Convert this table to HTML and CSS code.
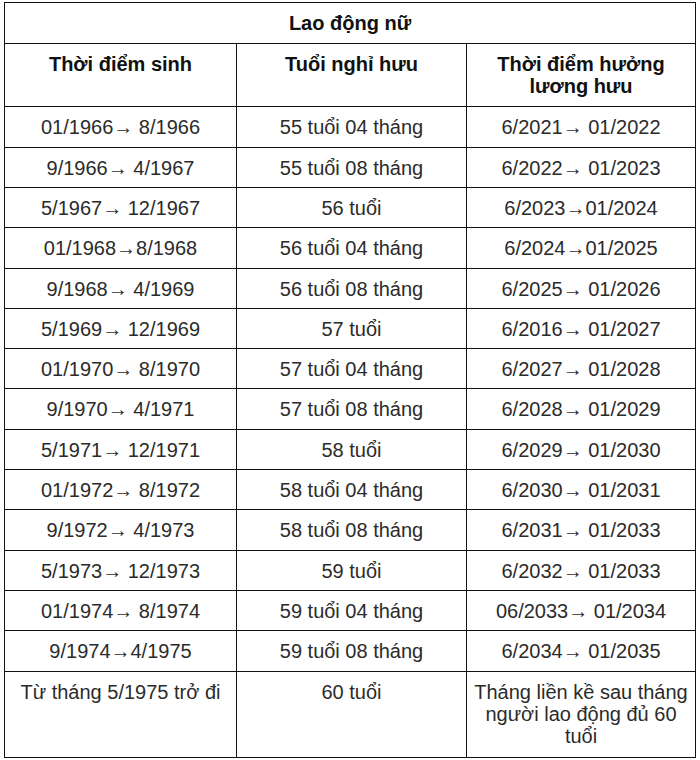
FILE: index.html
```html
<!DOCTYPE html>
<html lang="vi">
<head>
<meta charset="utf-8">
<link rel="stylesheet" href="styles.css">
</head>
<body>
<table class="retire">
  <colgroup><col class="c1"><col class="c2"><col class="c3"></colgroup>
  <thead>
    <tr><th colspan="3" class="title">Lao động nữ</th></tr>
    <tr class="head">
      <th>Thời điểm sinh</th>
      <th>Tuổi nghỉ hưu</th>
      <th>Thời điểm hưởng lương hưu</th>
    </tr>
  </thead>
  <tbody>
    <tr><td>01/1966→ 8/1966</td><td>55 tuổi 04 tháng</td><td>6/2021→ 01/2022</td></tr>
    <tr><td>9/1966→ 4/1967</td><td>55 tuổi 08 tháng</td><td>6/2022→ 01/2023</td></tr>
    <tr><td>5/1967→ 12/1967</td><td>56 tuổi</td><td>6/2023→01/2024</td></tr>
    <tr><td>01/1968→8/1968</td><td>56 tuổi 04 tháng</td><td>6/2024→01/2025</td></tr>
    <tr><td>9/1968→ 4/1969</td><td>56 tuổi 08 tháng</td><td>6/2025→ 01/2026</td></tr>
    <tr><td>5/1969→ 12/1969</td><td>57 tuổi</td><td>6/2016→ 01/2027</td></tr>
    <tr><td>01/1970→ 8/1970</td><td>57 tuổi 04 tháng</td><td>6/2027→ 01/2028</td></tr>
    <tr><td>9/1970→ 4/1971</td><td>57 tuổi 08 tháng</td><td>6/2028→ 01/2029</td></tr>
    <tr><td>5/1971→ 12/1971</td><td>58 tuổi</td><td>6/2029→ 01/2030</td></tr>
    <tr><td>01/1972→ 8/1972</td><td>58 tuổi 04 tháng</td><td>6/2030→ 01/2031</td></tr>
    <tr><td>9/1972→ 4/1973</td><td>58 tuổi 08 tháng</td><td>6/2031→ 01/2033</td></tr>
    <tr><td>5/1973→ 12/1973</td><td>59 tuổi</td><td>6/2032→ 01/2033</td></tr>
    <tr><td>01/1974→ 8/1974</td><td>59 tuổi 04 tháng</td><td>06/2033→ 01/2034</td></tr>
    <tr><td>9/1974→4/1975</td><td>59 tuổi 08 tháng</td><td>6/2034→ 01/2035</td></tr>
    <tr class="last"><td>Từ tháng 5/1975 trở đi</td><td>60 tuổi</td><td>Tháng liền kề sau tháng người lao động đủ 60 tuổi</td></tr>
  </tbody>
</table>
</body>
</html>
```

FILE: styles.css
```css
html, body {
  margin: 0;
  padding: 0;
  background: #ffffff;
}
body {
  padding: 2px 0 0 4px;
  font-family: "Liberation Sans", Arial, sans-serif;
  color: #2b2b2b;
}
.retire {
  border-collapse: collapse;
  width: 691px;
  table-layout: fixed;
  font-size: 20px;
  line-height: 22.3px;
}
.c1 { width: 232px; }
.c2 { width: 230px; }
.c3 { width: 229px; }
.retire th, .retire td {
  border: 1px solid #111111;
  text-align: center;
  vertical-align: top;
}
.retire th {
  font-weight: bold;
  color: #111111;
  padding: 9px 10px;
}
.retire th.title {
  padding: 9px 10px 8.5px;
}
.retire td {
  padding: 9px 6px 8px;
}
.retire tr.last td {
  padding: 9px 6px 10px;
}
```
